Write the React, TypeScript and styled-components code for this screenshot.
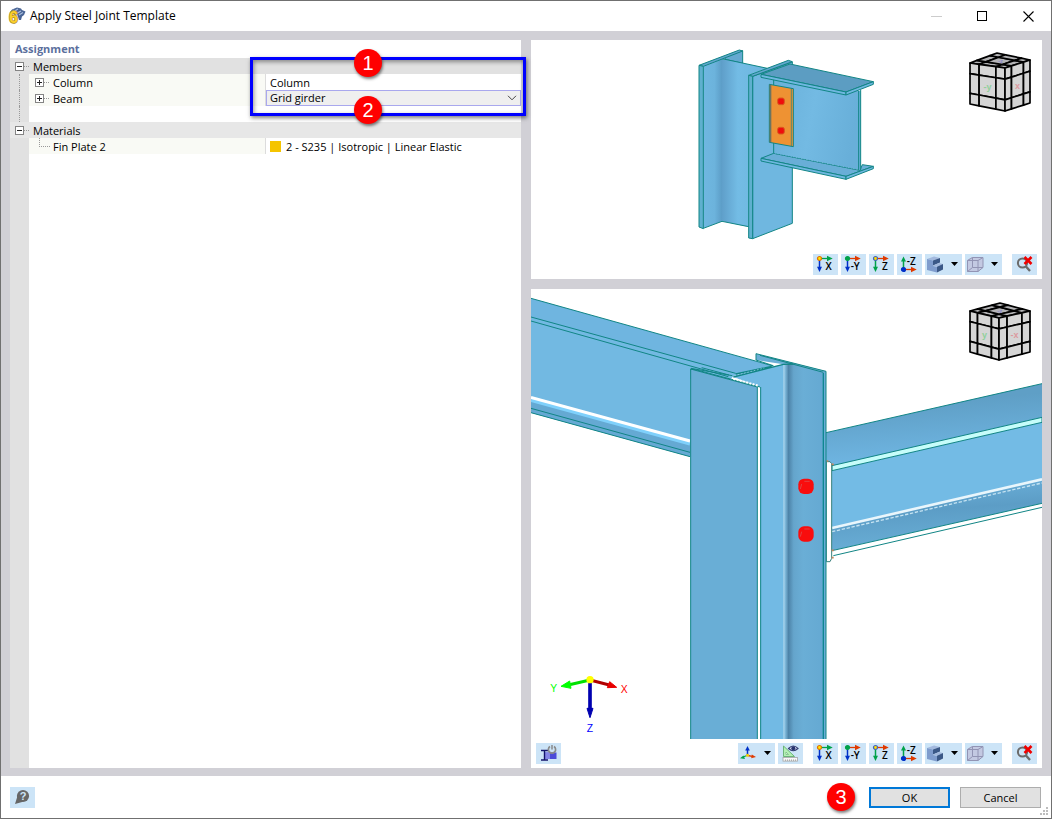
import React from "react";
import styled, { createGlobalStyle } from "styled-components";

const GlobalStyle = createGlobalStyle`
  * { box-sizing: border-box; }
  body { margin: 0; }
  body, button, select {
    font-family: "Open Sans", "Noto Sans", sans-serif;
    font-size: 11px;
    line-height: 16px;
    color: #000;
  }
`;

/* ---------- window frame ---------- */

const Dialog = styled.div`
  display: flex;
  flex-direction: column;
  min-height: 100vh;
  background: #fff;
  border: 1px solid #707070;
`;

const TitleBar = styled.header`
  display: flex;
  align-items: center;
  height: 30px;
  padding-left: 7px;
  gap: 4px;
`;

const Title = styled.h1`
  flex: 1;
  margin: 0;
  font-size: 12px;
  font-weight: 400;
`;

const WindowButton = styled.button`
  display: grid;
  place-items: center;
  width: 46px;
  height: 30px;
  padding: 0;
  border: 0;
  background: none;
`;

const WindowButtons = styled.div`
  display: flex;
`;

const Body = styled.main`
  flex: 1;
  display: grid;
  grid-template-columns: minmax(0, 1fr) minmax(0, 1fr);
  gap: 10px;
  padding: 9px 9px 8px;
  background: #d1d0d6;
`;

/* ---------- property tree ---------- */

const Panel = styled.section`
  position: relative;
  display: flex;
  flex-direction: column;
  background: #fff;
`;

const PanelTitle = styled.h2`
  margin: 0;
  padding-left: 5px;
  height: 18px;
  line-height: 18px;
  font-size: 11px;
  font-weight: 700;
  color: #5b6f9d;
`;

const Tree = styled.div`
  flex: 1;
  line-height: 18px;
  background: linear-gradient(to right, #e1e1e1 19px, #fff 19px);
`;

const GroupRow = styled.div<{ $shade: string }>`
  display: flex;
  align-items: center;
  height: 16px;
  padding-left: 5px;
  background: ${(p) => p.$shade};
`;

const Row = styled.div`
  display: grid;
  grid-template-columns: 19px 236px minmax(0, 1fr);
  height: 16px;
`;

const Gutter = styled.div<{ $line?: boolean }>`
  margin-left: 9px;
  border-left: 1px dotted ${(p) => (p.$line ? "#999" : "transparent")};
`;

const NameCell = styled.div`
  display: flex;
  align-items: center;
  height: 16px;
  padding-left: 6px;
  background: #f9faf5;
`;

const ValueCell = styled.div`
  position: relative;
  display: flex;
  align-items: center;
  height: 16px;
  gap: 5px;
  padding-left: 4px;
  border-left: 1px solid #dcdcdc;
`;

const RowText = styled.span`
  padding-top: 1px;
`;

const Expander = styled.button`
  width: 9px;
  height: 9px;
  padding: 0;
  border: 0;
  background: none;
  svg { display: block; }
`;

const Stub = styled.span`
  width: 5px;
  margin-right: 4px;
  border-top: 1px dotted #999;
`;

const LeafBranch = styled.span`
  align-self: flex-start;
  width: 11px;
  height: 9px;
  margin: 0 3px 0 4px;
  border-left: 1px dotted #999;
  border-bottom: 1px dotted #999;
`;

const Swatch = styled.span`
  width: 11px;
  height: 11px;
  background: #f5c400;
`;

const Combo = styled.select`
  position: absolute;
  inset: 0;
  width: 100%;
  height: 16px;
  padding: 0 3px;
  line-height: 14px;
  appearance: none;
  border: 1px solid #a9a8ee;
  border-radius: 0;
  background: #efefef;
`;

const ComboArrow = styled.svg`
  position: absolute;
  right: 4px;
  top: 5px;
  pointer-events: none;
`;

/* ---------- callouts ---------- */

const CalloutFrame = styled.div`
  position: absolute;
  left: 240px;
  right: -5px;
  top: 17px;
  height: 59px;
  border: 3px solid #00f;
  box-shadow: 1px 2px 4px rgba(0, 0, 0, 0.5), inset 1px 2px 4px rgba(0, 0, 0, 0.4);
  pointer-events: none;
  z-index: 2;
`;

const Badge = styled.span`
  display: grid;
  place-items: center;
  width: 28px;
  height: 28px;
  border-radius: 50%;
  background: #ff0000;
  color: #fff;
  font-family: "Liberation Sans", Arial, sans-serif;
  font-size: 20px;
  line-height: 28px;
  box-shadow: 1px 2px 3px rgba(0, 0, 0, 0.5);
`;

const FrameBadge = styled(Badge)<{ $edge: "top" | "bottom" }>`
  position: absolute;
  left: 101px;
  ${(p) => p.$edge}: -11px;
`;

/* ---------- 3D views ---------- */

const Views = styled.div`
  display: grid;
  grid-template-rows: 239fr 479fr;
  gap: 10px;
  min-width: 0;
`;

const View = styled(Panel)`
  min-height: 0;
  min-width: 0;
`;

const SceneBox = styled.div`
  flex: 1 1 0;
  min-height: 0;
  overflow: hidden;
  > svg { display: block; width: 100%; height: 100%; }
`;

const CubeSvg = styled.svg`
  position: absolute;
  right: 10px;
  top: 11px;
`;

const Toolbar = styled.div`
  display: flex;
  align-items: center;
  height: 29px;
  padding: 0 5px;
`;

const ToolGroup = styled.div`
  display: flex;
  gap: 3px;
  & + & { margin-left: 10px; }
`;

const ToolButton = styled.button`
  display: flex;
  align-items: center;
  height: 21px;
  padding: 0;
  border: 0;
  background: #cce4f7;
  svg { display: block; }
`;

/* ---------- footer ---------- */

const Footer = styled.footer`
  position: relative;
  display: flex;
  align-items: center;
  height: 42px;
  padding: 0 10px 0 9px;
  gap: 10px;
`;

const Spacer = styled.div`
  flex: 1;
`;

const StepBadge = styled(Badge)`
  margin-right: 4px;
`;

const DialogButton = styled.button<{ $primary?: boolean }>`
  width: 81px;
  height: 21px;
  padding: 1px 0 0;
  border: ${(p) => (p.$primary ? "2px solid #0078d7" : "1px solid #adadad")};
  background: #e1e1e1;
`;

const Grip = styled.svg`
  position: absolute;
  right: 2px;
  bottom: 2px;
`;

/* ---------- icons ---------- */

function AppIcon() {
  return (
    <svg width="18" height="18" viewBox="0 0 18 18" aria-hidden="true">
      <path d="M1.5 6L4 2.5L9 .5L13 1.5L14 3L17.5 4.5L16 8L14 9.5L13 13L11 13L9 7Z" fill="#4a6595" />
      <path d="M3 6L6 3M6 4.5L10 2M9.5 6L13 4M11 8L15 5.5" stroke="#a9bddd" strokeWidth="1.2" />
      <text x="1" y="16" fontFamily="Liberation Sans" fontWeight="700" fontSize="16" fill="#fbd02c" stroke="#a98a24" strokeWidth="1.4" paintOrder="stroke">6</text>
    </svg>
  );
}

const RED = "#e03a00";
const GREEN = "#00a24a";
const BLUE = "#0030c8";

type AxisProps = { label: string; dot: string; ring: string; right: string; vert: string; up?: boolean };

function AxisIcon({ label, dot, ring, right, vert, up }: AxisProps) {
  const y = up ? 15.5 : 4.5;
  return (
    <svg width="25" height="21" viewBox="0 0 25 21" aria-hidden="true">
      <path d={`M7 ${y}H15`} stroke={right} strokeWidth="1.3" />
      <path d={`M14 ${y - 2.7}L19.7 ${y}L14 ${y + 2.7}Z`} fill={right} />
      <path d={up ? "M6.5 14V7" : "M6.5 6V13"} stroke={vert} strokeWidth="1.5" />
      <path d={up ? "M4 7.5L6.5 2.5L9 7.5Z" : "M4 12.8L6.5 18L9 12.8Z"} fill={vert} />
      <circle cx="6.5" cy={y} r="2" fill={dot} stroke={ring} strokeWidth="1.2" />
      <text x="18.8" y={up ? 11 : 16} textAnchor="end" fontFamily="Open Sans" fontWeight="600" fontSize="10">{label}</text>
    </svg>
  );
}

function SolidIcon() {
  return (
    <svg width="25" height="21" viewBox="0 0 25 21" aria-hidden="true">
      <path d="M2 5L9 2.5L15 4L8 6.5Z" fill="#a3b9de" />
      <path d="M2 5L8 6.5V12L12 12.8V18.5L2 16Z" fill="#7f9ccd" />
      <path d="M8 6.5L15 4V8.5L8 11.5Z" fill="#3b5887" />
      <path d="M8 11.5L14 9L18 10L12 12.8Z" fill="#a3b9de" />
      <path d="M12 12.8L18 10V15.5L12 18.5Z" fill="#3b5887" />
    </svg>
  );
}

function WireIcon() {
  return (
    <svg width="25" height="21" viewBox="0 0 25 21" aria-hidden="true">
      <path d="M2 6L7 3H18V13L13 18H2Z" fill="#c3c9e2" />
      <path d="M2.5 6.5H13V17.5H2.5ZM13 6.5L18 3.5V13.5L13 17.5M2.5 6.5L7.5 3.5H18M7.5 3.5V13.5H18M7.5 13.5L2.5 17.5" fill="none" stroke="#9294b4" strokeWidth="1" />
    </svg>
  );
}

function Caret() {
  return (
    <svg width="12" height="21" viewBox="0 0 12 21" aria-hidden="true">
      <path d="M1 8H8L4.5 12Z" fill="#000" />
    </svg>
  );
}

function ClearSearchIcon() {
  return (
    <svg width="25" height="21" viewBox="0 0 25 21" aria-hidden="true">
      <circle cx="10.5" cy="9" r="4.6" fill="none" stroke="#6b6b6b" strokeWidth="2" />
      <path d="M13.5 12L18 17" stroke="#6b6b6b" strokeWidth="2.4" />
      <path d="M12.5 3L19.5 10M19.5 3L12.5 10" stroke="#f00000" strokeWidth="2.6" />
    </svg>
  );
}

function AxesIcon() {
  return (
    <svg width="25" height="21" viewBox="0 0 25 21" aria-hidden="true">
      <path d="M9.5 12V6" stroke={BLUE} strokeWidth="1.5" />
      <path d="M7.2 7.5L9.5 3L11.8 7.5Z" fill={BLUE} />
      <path d="M9 12.5L5 14" stroke={GREEN} strokeWidth="1.3" />
      <path d="M2 15.3L5.5 12.6L7 16Z" fill={GREEN} />
      <path d="M10 12.5L14 13.4" stroke={RED} strokeWidth="1.3" />
      <path d="M18 14L13.8 11.5L13.2 15.3Z" fill={RED} />
      <circle cx="9.5" cy="12.3" r="1.5" fill="#f5d000" />
    </svg>
  );
}

function RulerIcon() {
  return (
    <svg width="25" height="21" viewBox="0 0 25 21" aria-hidden="true">
      <path d="M5.5 3V13.5H16.5Z" fill="#b4f0b4" stroke="#6cb47a" strokeWidth="1" />
      <path d="M8 9V11.5H10.5Z" fill="#fff" stroke="#6cb47a" strokeWidth=".7" />
      <rect x="5" y="14.5" width="14.5" height="3.6" fill="#f8f8f8" stroke="#a5a5a5" strokeWidth=".8" />
      <path d="M7.5 16.4V18M9.5 16.4V18M11.5 16.4V18M13.5 16.4V18M15.5 16.4V18M17.5 16.4V18" stroke="#999" strokeWidth=".7" />
      <path d="M10.5 5.5Q15.3 .5 20 5.5Q15.3 10 10.5 5.5Z" fill="#d5d9ef" stroke="#333e72" strokeWidth="1.1" />
      <circle cx="15.3" cy="5.3" r="2" fill="#28346e" />
    </svg>
  );
}

function SectionPowerIcon() {
  return (
    <svg width="25" height="21" viewBox="0 0 25 21" aria-hidden="true">
      <rect x="9" y="9.5" width="11.5" height="6.5" fill="#4c4cd8" />
      <path d="M9 9.5H14V16H9Z" fill="#8585e6" />
      <path d="M5 7.5H12M5 17H12M8.5 7.5V17" stroke="#14146c" strokeWidth="1.4" />
      <path d="M14 3.5A3.6 3.6 0 1 0 18 3.5" fill="none" stroke="#8a8a8a" strokeWidth="1.7" />
      <path d="M16 2V6.5" stroke="#8a8a8a" strokeWidth="1.5" />
    </svg>
  );
}

function HelpIcon() {
  return (
    <svg width="25" height="21" viewBox="0 0 25 21" aria-hidden="true">
      <circle cx="13" cy="9" r="6.1" fill="#666" />
      <path d="M5 17L7.5 9L13 14.8Z" fill="#666" />
      <text x="13" y="12.8" textAnchor="middle" fontFamily="Liberation Sans" fontWeight="700" fontSize="11" fill="#cce4f7">?</text>
    </svg>
  );
}

function ExpandMark({ open }: { open?: boolean }) {
  return (
    <svg width="9" height="9" viewBox="0 0 9 9" aria-hidden="true">
      <rect x=".5" y=".5" width="8" height="8" fill="#fff" stroke="#848484" />
      <path d={open ? "M2 4.5H7" : "M2 4.5H7M4.5 2V7"} stroke="#222" />
    </svg>
  );
}

/* ---------- navigation cube ---------- */

type Pt = [number, number];
type Face = { corners: [Pt, Pt, Pt, Pt]; label: string; color: string };

const STEPS = [0, 0.26, 0.74, 1];

function onFace([a, b, c, d]: [Pt, Pt, Pt, Pt], u: number, v: number): Pt {
  const mix = (i: 0 | 1) => (a[i] * (1 - u) + b[i] * u) * (1 - v) + (d[i] * (1 - u) + c[i] * u) * v;
  return [mix(0), mix(1)];
}

function NavCube({ faces }: { faces: Face[] }) {
  return (
    <CubeSvg width="64" height="62" viewBox="0 0 64 62" role="img" aria-label="Navigation cube">
      {faces.map((face, f) => (
        <g key={f}>
          {[0, 1, 2].flatMap((i) =>
            [0, 1, 2].map((j) => {
              const u0 = STEPS[i], u1 = STEPS[i + 1], v0 = STEPS[j], v1 = STEPS[j + 1];
              const pts = [onFace(face.corners, u0, v0), onFace(face.corners, u1, v0), onFace(face.corners, u1, v1), onFace(face.corners, u0, v1)];
              return (
                <polygon key={`${i}${j}`} points={pts.map((p) => p.join(",")).join(" ")} fill={f === 0 ? "#b4b4b6" : "#d5d5d5"} stroke="#000" strokeWidth="1.7" strokeLinejoin="round" />
              );
            })
          )}
          <text
            x={onFace(face.corners, 0.5, 0.5)[0]}
            y={onFace(face.corners, 0.5, 0.5)[1] + (f === 0 ? 2 : 3)}
            textAnchor="middle"
            fontFamily="Liberation Sans"
            fontWeight="700"
            fontSize={f === 0 ? 6 : 9}
            fill={face.color}
          >
            {face.label}
          </text>
        </g>
      ))}
    </CubeSvg>
  );
}

function cubeFaces(l: Pt, back: Pt, r: Pt, front: Pt, bl: Pt, bf: Pt, br: Pt, names: string[]): Face[] {
  return [
    { corners: [l, back, r, front], label: names[0], color: "#8a8acb" },
    { corners: [l, front, bf, bl], label: names[1], color: "#8fd09a" },
    { corners: [front, r, br, bf], label: names[2], color: "#dc9a9f" },
  ];
}

const UPPER_CUBE = cubeFaces([2, 12], [29, 2], [62, 9], [37, 17], [2, 53], [37, 60], [62, 52], ["-z", "-y", "x"]);
const LOWER_CUBE = cubeFaces([2, 11], [32, 3], [62, 11], [31, 18], [2, 52], [31, 60], [62, 52], ["-z", "y", "-x"]);

/* ---------- joint preview ---------- */

const EDGE = "#118585";

function JointScene() {
  return (
    <svg viewBox="0 0 1533 630" role="img" aria-label="Joint preview">
      <defs>
        <linearGradient id="colWeb" x1="0" x2="1">
          <stop offset="0" stopColor="#5f9fca" />
          <stop offset=".35" stopColor="#73bce5" />
          <stop offset="1" stopColor="#6db5de" />
        </linearGradient>
        <linearGradient id="colFlange" x1="0" x2="1">
          <stop offset="0" stopColor="#6fb7e0" />
          <stop offset=".6" stopColor="#6cb3dc" />
          <stop offset="1" stopColor="#5c9dc7" />
        </linearGradient>
        <linearGradient id="beamWeb" x1="0" x2="1" y2=".2">
          <stop offset="0" stopColor="#69b0d9" />
          <stop offset=".5" stopColor="#73bae3" />
          <stop offset="1" stopColor="#68afd9" />
        </linearGradient>
      </defs>
      <g transform="translate(447 -12)" stroke={EDGE} strokeWidth="3" strokeLinejoin="round">
        <path d="M135 62L188 44V82L135 70Z" fill="#65a9d1" />
        <path d="M126 68L262 97L206 118V573L126 556Z" fill="url(#colWeb)" stroke="none" />
        <path d="M70 90L126 68V556L70 577Z" fill="url(#colFlange)" stroke="none" />
        <path d="M126 68L262 97M70 577L126 556L206 572" fill="none" />
        <path d="M57 88L178 42L188 45L70 91Z" fill="#62a6cf" />
        <path d="M57 88L70 91V578L57 573Z" fill="#5fb0cf" />
        <path d="M218 121L337 78V562L218 608Z" fill="#6fb7e0" />
        <path d="M206 118L325 73L337 77L218 121Z" fill="#62a6cf" />
        <path d="M206 118L218 121V608L206 606Z" fill="#5fb0cf" />
        <path d="M243 367L281 352L540 403L547 386L580 391L498 421Z" fill="#69aed7" />
        <path d="M281 128L542 165V403L281 352Z" fill="url(#beamWeb)" stroke="none" />
        <path d="M281 128V352M542 162V403M536 165V402" fill="none" />
        <path d="M281 352L536 402" strokeDasharray="3 5" strokeWidth="2" />
        <path d="M243 367L498 421V430L243 375Z" fill="#6fb7e0" />
        <path d="M498 421L580 391V398L498 430Z" fill="#6fb7e0" />
        <path d="M243 115L330 84L580 137L498 168Z" fill="#5c9dc2" />
        <path d="M243 115L498 168V177L243 124Z" fill="#6fb7e0" />
        <path d="M498 168L580 137V145L498 177Z" fill="#6fb7e0" />
        <path d="M268 145L340 158V332L268 319Z" fill="#ee9233" />
        <path d="M269 146L274 147V319L269 318Z" fill="#6d7460" stroke="none" />
        <path d="M334 157V331" strokeWidth="2" />
        <rect x="293" y="186" width="20" height="20" rx="6" fill="#f00c0c" stroke="#d85a20" />
        <rect x="293" y="274" width="20" height="20" rx="6" fill="#f00c0c" stroke="#d85a20" />
      </g>
    </svg>
  );
}

function ModelScene() {
  return (
    <svg viewBox="0 0 1533 1350" role="img" aria-label="Structural model">
      <defs>
        <linearGradient id="backFlange" x1="757" x2="877" gradientUnits="userSpaceOnUse">
          <stop offset="0" stopColor="#b9def3" />
          <stop offset=".05" stopColor="#7eb8da" />
          <stop offset=".13" stopColor="#4d83a8" />
          <stop offset=".26" stopColor="#65a5cc" />
          <stop offset=".5" stopColor="#6aaed6" />
          <stop offset="1" stopColor="#65a9d2" />
        </linearGradient>
        <linearGradient id="rightTop" x1="0" y1="0" x2=".2" y2="1">
          <stop offset=".3" stopColor="#5f9fc6" />
          <stop offset="1" stopColor="#70b7e4" />
        </linearGradient>
        <linearGradient id="rightLow" x1="0" y1="0" x2=".2" y2="1">
          <stop offset="0" stopColor="#6fb5df" />
          <stop offset=".5" stopColor="#5c9dc6" />
          <stop offset="1" stopColor="#69aed6" />
        </linearGradient>
      </defs>
      <g strokeLinejoin="round">
        {/* girder on the left */}
        <path d="M0 28L727 231L614 263L0 90Z" fill="#6fb5e0" />
        <path d="M0 84L614 253L600 270H479V503L0 371Z" fill="#72b9e2" />
        <path d="M0 330L477 461V503L0 371Z" fill="#65a9d3" />
        <path d="M0 333L477 464" stroke="#7fd0fb" strokeWidth="12" />
        <path d="M0 325L477 456" stroke="#fff" strokeWidth="9" />
        <path d="M0 28L727 231M0 84L614 253M0 96L592 263M0 358L477 490M0 371L477 503" fill="none" stroke={EDGE} strokeWidth="3" />

        {/* girder on the right */}
        <path d="M885 431L1533 284V390L903 535H885Z" fill="url(#rightTop)" />
        <path d="M900 545L1533 400V571L900 717Z" fill="#73bbe5" />
        <path d="M900 717L1533 571V643L900 785Z" fill="url(#rightLow)" />
        <path d="M903 530L1533 385V400L903 545Z" fill="#c6fdfa" stroke={EDGE} strokeWidth="3" />
        <path d="M903 717L1533 571" stroke="#e9f6fc" strokeWidth="8" />
        <path d="M903 728L1533 582" stroke="#c5e3f2" strokeWidth="4" strokeDasharray="10 5" />
        <path d="M885 431L1533 284M903 785L1533 643M907 800L1533 655" fill="none" stroke={EDGE} strokeWidth="3" />
        <path d="M886 518H897L902 524V808L897 818H886Z" fill="#fff" stroke="#38807c" strokeWidth="3" />
        <path d="M886 516H892M902 526H908M902 784H908M902 806H908" stroke="#c98559" strokeWidth="5" />

        {/* column */}
        <path d="M675 194L885 247V1350H757V226L675 213Z" fill="#6aaed6" />
        <path d="M757 226L787 224L877 250V1350H757Z" fill="url(#backFlange)" />
        <path d="M607 264L757 226V1350H687V294Z" fill="#72bae4" />
        <path d="M479 240L679 294V1350H479Z" fill="#69aed6" />
        <path d="M680 294H688V1350H680Z" fill="#fff" />
        <path d="M675 213V194L885 247V1350M479 1350V240L679 294V1350M689 294V1350M479 240L494 242L687 294M675 213L727 230" fill="none" stroke={EDGE} strokeWidth="3" />
        <path d="M687 199L877 250" stroke={EDGE} strokeWidth="3" />
        <path d="M607 264L757 226L787 225M614 255L722 232" fill="none" stroke={EDGE} strokeWidth="4" />
        <path d="M480 238L604 260M512 236L594 258" stroke={EDGE} strokeWidth="3" />
        <path d="M610 260L700 237" stroke="#a8dce8" strokeWidth="2" strokeDasharray="5 5" />
        <path d="M607 269L682 290" stroke="#fff" strokeWidth="6" strokeDasharray="6 4" />
        <path d="M877 252V1350" stroke="#0e8791" strokeWidth="4" />
        <rect x="802" y="569" width="46" height="46" rx="17" fill="#f90d0d" />
        <rect x="802" y="712" width="46" height="46" rx="17" fill="#f90d0d" />
        <path d="M808 600L812 585M820 577H836M808 743L812 728M820 720H836" fill="none" stroke="#e04343" strokeWidth="3" />

        {/* coordinate axes */}
        <path d="M177 1173L115 1187" stroke="#00e000" strokeWidth="9" />
        <path d="M90 1192L116 1176L120 1198Z" fill="#0f0" stroke="#0f0" strokeWidth="3" />
        <path d="M177 1173L235 1188" stroke="#b00000" strokeWidth="9" />
        <path d="M257 1195L236 1178L229 1196Z" fill="#e80000" stroke="#e80000" strokeWidth="3" />
        <path d="M177 1173V1262" stroke="#0000b0" strokeWidth="11" />
        <path d="M177 1286L168 1258H186Z" fill="#0000b0" stroke="#0000b0" strokeWidth="3" />
        <circle cx="177" cy="1172" r="11" fill="#ff0" />
        <g fontFamily="Liberation Sans" fontSize="31">
          <text x="58" y="1208" fill="#0f0">Y</text>
          <text x="269" y="1212" fill="#f00">X</text>
          <text x="167" y="1329" fill="#00f">Z</text>
        </g>
      </g>
    </svg>
  );
}

function ViewTools() {
  return (
    <>
      <ToolGroup>
        <ToolButton aria-label="View in X"><AxisIcon label="X" dot="#ffe600" ring="#e07000" right={GREEN} vert={BLUE} /></ToolButton>
        <ToolButton aria-label="View against Y"><AxisIcon label="-Y" dot={GREEN} ring={GREEN} right={RED} vert={BLUE} /></ToolButton>
        <ToolButton aria-label="View in Z"><AxisIcon label="Z" dot="#ffe000" ring="#4060c0" right={RED} vert={GREEN} /></ToolButton>
        <ToolButton aria-label="View against Z"><AxisIcon label="-Z" dot={BLUE} ring={BLUE} right={RED} vert={GREEN} up /></ToolButton>
        <ToolButton aria-label="Display mode"><SolidIcon /><Caret /></ToolButton>
        <ToolButton aria-label="Transparency"><WireIcon /><Caret /></ToolButton>
      </ToolGroup>
      <ToolGroup>
        <ToolButton aria-label="Reset zoom"><ClearSearchIcon /></ToolButton>
      </ToolGroup>
    </>
  );
}

export default function App() {
  return (
    <>
      <GlobalStyle />
      <Dialog role="dialog" aria-labelledby="dialog-title">
        <TitleBar>
          <AppIcon />
          <Title id="dialog-title">Apply Steel Joint Template</Title>
          <WindowButtons>
            <WindowButton aria-label="Minimize" disabled>
              <svg width="11" height="11"><path d="M0 5.5H11" stroke="#ccc" /></svg>
            </WindowButton>
            <WindowButton aria-label="Maximize">
              <svg width="11" height="11"><rect x=".5" y=".5" width="9" height="9" fill="none" stroke="#000" /></svg>
            </WindowButton>
            <WindowButton aria-label="Close">
              <svg width="11" height="11"><path d="M.5 .5L10.5 10.5M10.5 .5L.5 10.5" stroke="#000" strokeWidth="1.1" /></svg>
            </WindowButton>
          </WindowButtons>
        </TitleBar>

        <Body>
          <Panel>
            <PanelTitle>Assignment</PanelTitle>
            <Tree>
              <GroupRow $shade="#e1e1e1">
                <Expander aria-label="Collapse Members"><ExpandMark open /></Expander>
                <Stub />
                <RowText>Members</RowText>
              </GroupRow>
              <Row>
                <Gutter $line />
                <NameCell>
                  <Expander aria-label="Expand Column"><ExpandMark /></Expander>
                  <Stub />
                  <RowText>Column</RowText>
                </NameCell>
                <ValueCell><RowText>Column</RowText></ValueCell>
              </Row>
              <Row>
                <Gutter $line />
                <NameCell>
                  <Expander aria-label="Expand Beam"><ExpandMark /></Expander>
                  <Stub />
                  <RowText as="label" htmlFor="beam">Beam</RowText>
                </NameCell>
                <ValueCell>
                  <Combo id="beam" defaultValue="Grid girder">
                    <option>Grid girder</option>
                  </Combo>
                  <ComboArrow width="10" height="6"><path d="M1 .8L5 4.8L9 .8" fill="none" stroke="#444" /></ComboArrow>
                </ValueCell>
              </Row>
              <Row><Gutter $line /></Row>
              <GroupRow $shade="#e7e7e7">
                <Expander aria-label="Collapse Materials"><ExpandMark open /></Expander>
                <Stub />
                <RowText>Materials</RowText>
              </GroupRow>
              <Row>
                <Gutter />
                <NameCell>
                  <LeafBranch />
                  <RowText>Fin Plate 2</RowText>
                </NameCell>
                <ValueCell>
                  <Swatch />
                  <RowText>2 - S235 | Isotropic | Linear Elastic</RowText>
                </ValueCell>
              </Row>
            </Tree>
            <CalloutFrame>
              <FrameBadge $edge="top">1</FrameBadge>
              <FrameBadge $edge="bottom">2</FrameBadge>
            </CalloutFrame>
          </Panel>

          <Views>
            <View>
              <SceneBox><JointScene /></SceneBox>
              <NavCube faces={UPPER_CUBE} />
              <Toolbar>
                <Spacer />
                <ViewTools />
              </Toolbar>
            </View>
            <View>
              <SceneBox><ModelScene /></SceneBox>
              <NavCube faces={LOWER_CUBE} />
              <Toolbar>
                <ToolButton aria-label="Toggle sections"><SectionPowerIcon /></ToolButton>
                <Spacer />
                <ToolGroup>
                  <ToolButton aria-label="Axes"><AxesIcon /><Caret /></ToolButton>
                  <ToolButton aria-label="Show dimensions"><RulerIcon /></ToolButton>
                </ToolGroup>
                <ViewTools />
              </Toolbar>
            </View>
          </Views>
        </Body>

        <Footer>
          <ToolButton aria-label="Help"><HelpIcon /></ToolButton>
          <Spacer />
          <StepBadge>3</StepBadge>
          <DialogButton $primary>OK</DialogButton>
          <DialogButton>Cancel</DialogButton>
          <Grip width="9" height="9" aria-hidden="true">
            <path d="M6 0h2v2h-2zM3 3h2v2h-2zM6 3h2v2h-2zM0 6h2v2h-2zM3 6h2v2h-2zM6 6h2v2h-2z" fill="#bdbdbd" />
          </Grip>
        </Footer>
      </Dialog>
    </>
  );
}
